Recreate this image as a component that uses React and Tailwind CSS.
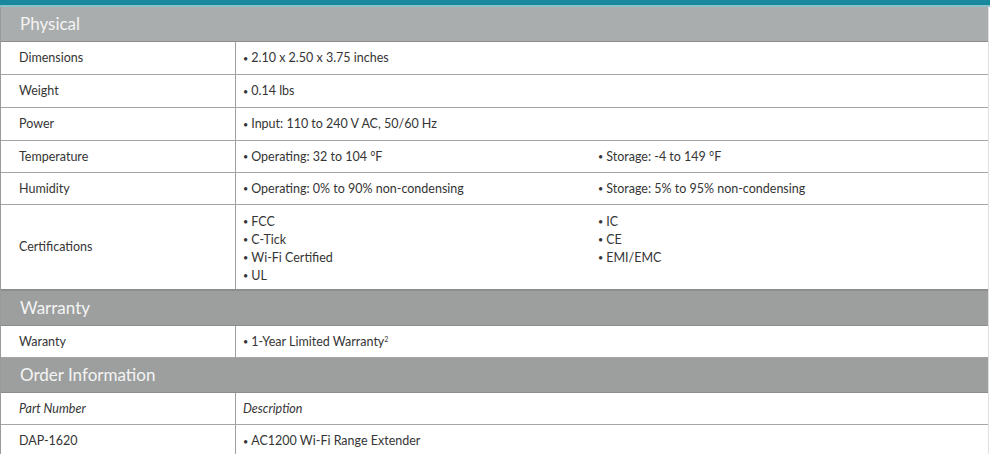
import React from "react";

const font = { fontFamily: "Lato, 'Open Sans', sans-serif" };

function Header({ title, light }) {
  return (
    <div
      className={`h-[35px] flex items-center pl-[19px] text-[17px] text-[#f4f4f4] border-b border-[#8c8e8e] ${
        light ? "bg-[#aaadad]" : "bg-[#9c9f9e]"
      }`}
    >
      {title}
    </div>
  );
}

function B({ children }) {
  return (
    <div className="flex items-center">
      <span className="text-[9px] mr-[3px]">•</span>
      <span>{children}</span>
    </div>
  );
}

function Row({ label, c1, c2, h = "h-[32px]", italic }) {
  return (
    <div className={`grid grid-cols-[235px_355px_1fr] border-b border-[#a6a6a6] pt-[1px] ${h}`}>
      <div className={`flex items-center pl-[18px] border-r border-[#a0a0a0] -mt-[1px] pt-[1px] ${italic ? "italic" : ""}`}>
        {label}
      </div>
      <div className="pl-[7px] flex items-center">{c1}</div>
      <div className="pl-[7px] flex items-center">{c2}</div>
    </div>
  );
}

export default function App() {
  return (
    <div
      className="w-[990px] h-[454px] overflow-hidden bg-white text-[12.5px] text-[#353535]"
      style={font}
    >
      <div className="h-[5px] bg-[#18889c]" />
      <div className="h-[2px] bg-[#8cc0ca]" />
      <div className="border-l border-[#9a9a9a] border-r border-r-[#e0e0e0] mr-[1px]">
        <Header title="Physical" light />
        <Row label="Dimensions" c1={<B>2.10 x 2.50 x 3.75 inches</B>} h="h-[33px]" />
        <Row label="Weight" c1={<B>0.14 lbs</B>} h="h-[33px]" />
        <Row label="Power" c1={<B>Input: 110 to 240 V AC, 50/60 Hz</B>} h="h-[33px]" />
        <Row
          label="Temperature"
          c1={<B>Operating: 32 to 104 °F</B>}
          c2={<B>Storage: -4 to 149 °F</B>}
        />
        <Row
          label="Humidity"
          c1={<B>Operating: 0% to 90% non-condensing</B>}
          c2={<B>Storage: 5% to 95% non-condensing</B>}
        />
        <div className="grid grid-cols-[235px_355px_1fr] border-b-2 border-[#8c8e8e] h-[86px]">
          <div className="flex items-center pl-[18px] border-r border-[#a0a0a0]">Certifications</div>
          <div className="pl-[7px] pt-[8px] leading-[18px]">
            <B>FCC</B>
            <B>C-Tick</B>
            <B>Wi-Fi Certified</B>
            <B>UL</B>
          </div>
          <div className="pl-[7px] pt-[8px] leading-[18px]">
            <B>IC</B>
            <B>CE</B>
            <B>EMI/EMC</B>
          </div>
        </div>
        <Header title="Warranty" />
        <Row
          label="Waranty"
          c1={
            <B>
              1-Year Limited Warranty<sup className="text-[7px]">2</sup>
            </B>
          }
        />
        <Header title="Order Information" />
        <Row label="Part Number" italic c1={<span className="italic">Description</span>} />
        <Row label="DAP-1620" c1={<B>AC1200 Wi-Fi Range Extender</B>} h="h-[33px]" />
      </div>
    </div>
  );
}
